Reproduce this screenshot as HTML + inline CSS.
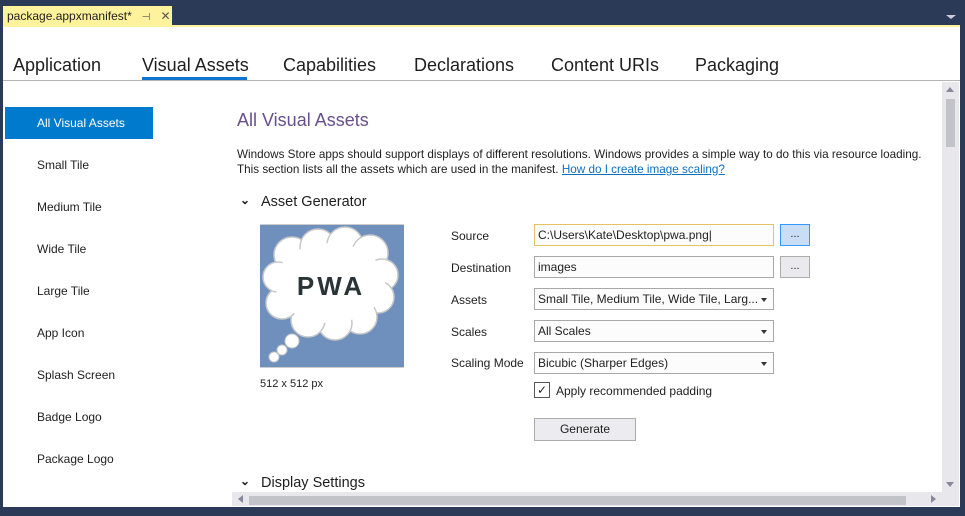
<!DOCTYPE html>
<html><head><meta charset="utf-8"><style>
*{margin:0;padding:0;box-sizing:border-box}
body{width:965px;height:516px;background:#2b3a56;font-family:"Liberation Sans",sans-serif;position:relative;overflow:hidden;color:#1e1e1e}
.a{position:absolute;white-space:nowrap}
.tab{font-size:18px;top:55px;color:#1e1e1e}
.nav{left:37px;font-size:12px}
.lbl{left:451px;font-size:12px}
.inp{position:absolute;left:534px;width:240px;height:22px;border:1px solid #a8a8a8;background:#fcfcfc;font-size:12px;padding:3px 3px;white-space:nowrap}
.dd::after{content:"";position:absolute;right:6px;top:9px;border:3px solid transparent;border-top:4px solid #333}
.btn{position:absolute;left:780px;width:30px;height:22px;border:1px solid #acacac;background:#e9e9ee;font-size:11px;text-align:center;line-height:18px}
</style></head><body>
<div class="a" style="left:3px;top:6px;width:169px;height:20px;background:#fff29d;font-size:12px;padding:3px 4px">package.appxmanifest*<span style="margin-left:10px;color:#555;font-size:10px">⊣</span><span style="margin-left:10px;color:#555">✕</span></div>
<div class="a" style="left:946px;top:15px;border:4px solid transparent;border-top:4px solid #ccd;border-left-width:5px;border-right-width:5px"></div>
<div class="a" style="left:3px;top:25px;width:957px;height:2px;background:#fff29d"></div>
<div class="a" style="left:3px;top:27px;width:957px;height:480px;background:#fff"></div>
<div class="a" style="left:3px;top:80px;width:957px;height:1px;background:#b4b4b4"></div>
<div class="a tab" style="left:13px">Application</div>
<div class="a tab" style="left:142px">Visual Assets</div>
<div class="a" style="left:142px;top:77px;width:105px;height:3px;background:#0e74cf"></div>
<div class="a tab" style="left:283px">Capabilities</div>
<div class="a tab" style="left:414px">Declarations</div>
<div class="a tab" style="left:551px">Content URIs</div>
<div class="a tab" style="left:695px">Packaging</div>

<div class="a" style="left:5px;top:107px;width:148px;height:32px;background:#007acc"></div>
<div class="a nav" style="top:116px;color:#fff">All Visual Assets</div>
<div class="a nav" style="top:158px">Small Tile</div>
<div class="a nav" style="top:200px">Medium Tile</div>
<div class="a nav" style="top:242px">Wide Tile</div>
<div class="a nav" style="top:284px">Large Tile</div>
<div class="a nav" style="top:326px">App Icon</div>
<div class="a nav" style="top:368px">Splash Screen</div>
<div class="a nav" style="top:410px">Badge Logo</div>
<div class="a nav" style="top:452px">Package Logo</div>

<div class="a" style="left:237px;top:110px;font-size:18px;color:#68508c">All Visual Assets</div>
<div class="a" style="left:237px;top:147px;font-size:11.7px;line-height:15px">Windows Store apps should support displays of different resolutions. Windows provides a simple way to do this via resource loading.<br>This section lists all the assets which are used in the manifest. <span style="color:#0e70c0;text-decoration:underline">How do I create image scaling?</span></div>
<div class="a" style="left:240px;top:193px;font-size:12px;font-weight:bold">⌄</div>
<div class="a" style="left:261px;top:194px;font-size:14.5px">Asset Generator</div>

<div class="a" style="left:260px;top:224px;width:144px;height:144px;background:#6f90bd;border-top:1px solid #ccc;border-bottom:1px solid #ccc">
<svg width="144" height="142" viewBox="0 0 144 142">
<g fill="#fff" stroke="#c8c8c8" stroke-width="1">
<circle cx="14" cy="132" r="5"/><circle cx="22" cy="125" r="5"/><circle cx="32" cy="116" r="7"/>
</g>
<g fill="#fff" stroke="#c8c8c8" stroke-width="1.5">
<circle cx="32" cy="30" r="18"/><circle cx="58" cy="22" r="18"/><circle cx="85" cy="20" r="18"/><circle cx="110" cy="28" r="18"/><circle cx="122" cy="50" r="16"/><circle cx="118" cy="72" r="16"/><circle cx="100" cy="92" r="17"/><circle cx="75" cy="98" r="17"/><circle cx="48" cy="95" r="17"/><circle cx="22" cy="78" r="16"/><circle cx="18" cy="52" r="15"/>
</g>
<ellipse cx="70" cy="58" rx="55" ry="40" fill="#fff"/>
<text x="71" y="70" text-anchor="middle" font-family="Liberation Sans" font-weight="bold" font-size="26" fill="#2a3335" letter-spacing="3">PWA</text>
</svg></div>
<div class="a" style="left:260px;top:378px;font-size:11px">512 x 512 px</div>

<div class="a lbl" style="top:229px">Source</div>
<div class="a lbl" style="top:261px">Destination</div>
<div class="a lbl" style="top:293px">Assets</div>
<div class="a lbl" style="top:325px">Scales</div>
<div class="a lbl" style="top:356px">Scaling Mode</div>
<div class="inp" style="top:224px;border-color:#e5c365">C:\Users\Kate\Desktop\pwa.png|</div>
<div class="btn" style="top:224px;background:#c9def5;border-color:#3399ff">...</div>
<div class="inp" style="top:256px">images</div>
<div class="btn" style="top:256px">...</div>
<div class="inp dd" style="top:288px">Small Tile, Medium Tile, Wide Tile, Larg...</div>
<div class="inp dd" style="top:320px">All Scales</div>
<div class="inp dd" style="top:352px">Bicubic (Sharper Edges)</div>
<div class="a" style="left:534px;top:382px;width:16px;height:16px;border:1px solid #555;background:#fff;font-size:12px;line-height:14px;text-align:center">✓</div>
<div class="a" style="left:556px;top:384px;font-size:12px">Apply recommended padding</div>
<div class="a" style="left:534px;top:418px;width:102px;height:23px;border:1px solid #acacac;background:#ececf0;font-size:12px;text-align:center;line-height:21px">Generate</div>

<div class="a" style="left:240px;top:474px;font-size:12px;font-weight:bold">⌄</div>
<div class="a" style="left:261px;top:475px;font-size:14.5px">Display Settings</div>

<div class="a" style="left:942px;top:82px;width:17px;height:410px;background:#e8e8ec"></div>
<div class="a" style="left:946px;top:87px;border:4px solid transparent;border-bottom:5px solid #868999;border-top:0"></div>
<div class="a" style="left:946px;top:99px;width:9px;height:48px;background:#c2c3c9"></div>
<div class="a" style="left:946px;top:482px;border:4px solid transparent;border-top:5px solid #868999;border-bottom:0"></div>
<div class="a" style="left:232px;top:492px;width:727px;height:14px;background:#e8e8ec"></div>
<div class="a" style="left:238px;top:495px;border:4px solid transparent;border-right:5px solid #868999;border-left:0"></div>
<div class="a" style="left:249px;top:496px;width:657px;height:9px;background:#c2c3c9"></div>
<div class="a" style="left:931px;top:495px;border:4px solid transparent;border-left:5px solid #868999;border-right:0"></div>
</body></html>
